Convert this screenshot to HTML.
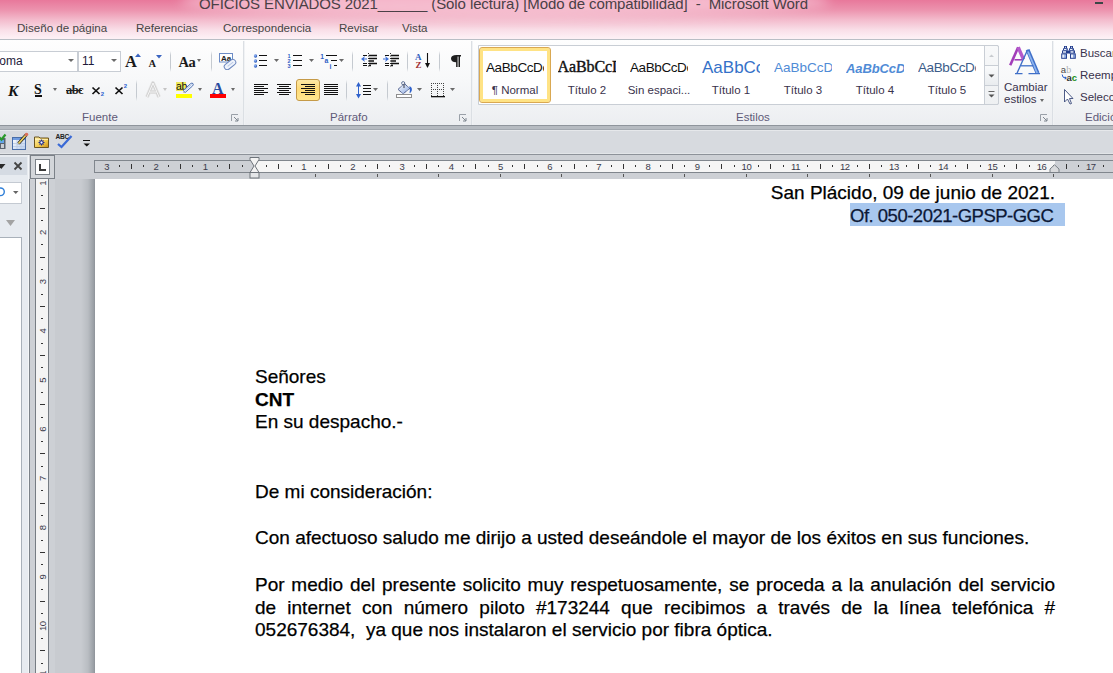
<!DOCTYPE html>
<html><head><meta charset="utf-8">
<style>
*{box-sizing:border-box}
html,body{margin:0;padding:0}
body{width:1113px;height:673px;overflow:hidden;position:relative;font-family:"Liberation Sans",sans-serif;background:#c8cbd0}
.a{position:absolute}
.t{position:absolute;white-space:nowrap;line-height:1}
#title{left:0;top:0;width:1113px;height:39px;background:linear-gradient(#e8789b 0px,#ec93ae 10px,#f3bccd 20px,#f9dfe8 30px,#fdf0f5 38px)}
.tab{position:absolute;top:21px;font-size:11.6px;color:#454545;line-height:14px;letter-spacing:0px}
#rib{left:0;top:40px;width:1113px;height:85px;background:linear-gradient(#fefefe 0px,#f7f8f9 40px,#eceef1 85px)}
.lbl{position:absolute;top:111px;font-size:11.5px;color:#5e5a78;line-height:13px}
.sep{position:absolute;width:1px;background:linear-gradient(rgba(200,205,212,0),#c5cad0 20%,#c5cad0 80%,rgba(200,205,212,0))}
.gsep{position:absolute;top:41px;height:84px;width:2px;background:linear-gradient(90deg,#d0d5db,#fbfcfd)}
.dd{position:absolute;width:0;height:0;border-left:3px solid transparent;border-right:3px solid transparent;border-top:3px solid #6a6a6a}
.doc{position:absolute;font-size:19px;color:#000;line-height:23px;white-space:nowrap;-webkit-text-stroke:0.25px #000}
.sty{position:absolute;top:47px;width:72px;height:56px;overflow:hidden}
.pv{position:absolute;left:7px;width:58px;overflow:hidden;white-space:nowrap;line-height:1}
.sl{position:absolute;left:0;width:72px;top:37px;text-align:center;font-size:11.5px;color:#39324c;line-height:13px;white-space:nowrap}
</style></head><body>

<!-- title bar -->
<div id="title" class="a"></div>
<div class="a" style="left:180px;top:-14px;width:650px;height:30px;border-radius:50%;background:rgba(255,235,242,0.55);filter:blur(6px)"></div>
<div class="t" style="left:199px;top:-4px;font-size:15px;color:#4a4046;letter-spacing:-0.1px">OFICIOS ENVIADOS 2021______ (Solo lectura) [Modo de compatibilidad]&nbsp; - &nbsp;Microsoft Word</div>
<div class="a" style="left:1095px;top:2px;width:8px;height:2px;background:#3b4646"></div>

<div class="tab" style="left:17px">Diseño de página</div>
<div class="tab" style="left:136px">Referencias</div>
<div class="tab" style="left:223px">Correspondencia</div>
<div class="tab" style="left:339px">Revisar</div>
<div class="tab" style="left:402px">Vista</div>
<div class="a" style="left:0;top:39px;width:1113px;height:1px;background:#b9bec5"></div>

<!-- ribbon -->
<div id="rib" class="a"></div>

<!-- group separators -->
<div class="gsep" style="left:243px"></div>
<div class="gsep" style="left:471px"></div>
<div class="gsep" style="left:1052px"></div>


<!-- FUENTE GROUP -->
<div class="a" style="left:-1px;top:51px;width:79px;height:21px;background:#fff;border:1px solid #c8cdd4"></div>
<div class="t" style="left:-20px;top:55px;font-size:12px;color:#1e1a3a">Tahoma</div>
<div class="dd" style="left:68px;top:59px;border-left-width:3px;border-right-width:3px;border-top-width:3px"></div>
<div class="a" style="left:78px;top:51px;width:43px;height:21px;background:#fff;border:1px solid #c8cdd4"></div>
<div class="t" style="left:82px;top:55px;font-size:12px;color:#1e1a3a">11</div>
<div class="dd" style="left:111px;top:59px"></div>
<div class="t" style="left:125px;top:54px;font-size:16.5px;font-family:'Liberation Serif';font-weight:bold;color:#1a1a1a">A</div>
<svg class="a" style="left:135px;top:53px" width="6" height="4"><path d="M0 4 L3 0.5 L6 4Z" fill="#3a64c0"/></svg>
<div class="t" style="left:148.5px;top:59px;font-size:10.5px;font-family:'Liberation Serif';font-weight:bold;color:#1a1a1a">A</div>
<svg class="a" style="left:156px;top:54.5px" width="6" height="4"><path d="M0 0 L6 0 L3 3.5Z" fill="#3a64c0"/></svg>
<div class="sep" style="left:170px;top:51px;height:21px"></div>
<div class="t" style="left:178.5px;top:55px;font-size:14.5px;font-family:'Liberation Serif';font-weight:bold;color:#1a1a1a;letter-spacing:-0.5px">Aa</div>
<div class="dd" style="left:197px;top:59px;border-width:3px 2.5px 0 2.5px"></div>
<div class="sep" style="left:211px;top:51px;height:21px"></div>
<svg class="a" style="left:219px;top:53px" width="18" height="17">
 <rect x="0.5" y="0.5" width="13" height="8.5" fill="#fff" stroke="#6d8cc6"/>
 <text x="2" y="8" font-family="Liberation Sans" font-size="8" font-weight="bold" fill="#222">Aa</text>
 <g transform="rotate(-38 11 11.5)"><rect x="4.5" y="8.5" width="13" height="6" rx="3" fill="#eef3fb" stroke="#6c86bd"/><line x1="8" y1="11.5" x2="15" y2="11.5" stroke="#b9c8e6"/></g>
</svg>

<div class="t" style="left:8px;top:82.5px;font-size:15.5px;font-family:'Liberation Serif';font-weight:bold;font-style:italic;color:#111">K</div>
<div class="t" style="left:34px;top:82.5px;font-size:14px;font-family:'Liberation Serif';font-weight:bold;color:#111">S</div>
<div class="a" style="left:35px;top:95px;width:7px;height:1.5px;background:#111"></div>
<div class="dd" style="left:53px;top:88px;border-width:3px 2.5px 0 2.5px"></div>
<div class="t" style="left:66px;top:84px;font-size:12.5px;font-family:'Liberation Serif';font-weight:bold;color:#222;letter-spacing:-0.6px">abc</div>
<div class="a" style="left:66px;top:90px;width:16px;height:1px;background:#222"></div>
<svg class="a" style="left:91px;top:83px" width="40" height="15">
 <path d="M1.5 4.5 L8.5 11 M8.5 4.5 L1.5 11" stroke="#111" stroke-width="1.7"/>
 <text x="9.8" y="13" font-family="Liberation Sans" font-size="6" font-weight="bold" fill="#2b5fd0">2</text>
 <path d="M24.5 4.5 L31.5 11 M31.5 4.5 L24.5 11" stroke="#111" stroke-width="1.7"/>
 <text x="32.8" y="5" font-family="Liberation Sans" font-size="6" font-weight="bold" fill="#2b5fd0">2</text>
</svg>
<div class="sep" style="left:136px;top:80px;height:21px"></div>
<svg class="a" style="left:144px;top:81px" width="18" height="18"><g fill="none" stroke-linejoin="round"><path d="M3 16 L9 2 L15 16 M5.5 11 H12.5" stroke="#e4e4e4" stroke-width="4"/><path d="M3 16 L9 2 L15 16 M5.5 11 H12.5" stroke="#cfcfcf" stroke-width="2.4"/><path d="M3 16 L9 2 L15 16 M5.5 11 H12.5" stroke="#fbfbfb" stroke-width="0.9"/></g></svg>
<div class="dd" style="left:163px;top:88px;border-width:3px 2.5px 0 2.5px;border-top-color:#c4c4c4"></div>
<div class="a" style="left:176px;top:82px;width:10px;height:9px;background:#eee85a"></div>
<div class="t" style="left:176px;top:81px;font-size:10.5px;color:#111;letter-spacing:-0.3px">ab</div>
<svg class="a" style="left:182px;top:82px" width="12" height="11">
 <path d="M1.5 9.8 L1 10.8 L3 10.3 Z" fill="#d2a050"/>
 <path d="M1.2 8.6 L8.6 1.6 Q10 0.6 11 1.6 Q11.8 2.8 10.6 3.9 L3.2 10.5 Z" fill="#e9f0fb" stroke="#3f63a8" stroke-width="0.9"/>
 <path d="M3 8.2 L9.5 2.4" stroke="#9ab4e0" stroke-width="0.8"/>
</svg>
<div class="a" style="left:176px;top:94px;width:16px;height:4px;background:#ffff00"></div>
<div class="dd" style="left:198px;top:88px;border-width:3px 2.5px 0 2.5px"></div>
<div class="t" style="left:212px;top:80.5px;font-size:16px;font-family:'Liberation Serif';font-weight:bold;color:#2a4c9e">A</div>
<div class="a" style="left:210px;top:94px;width:16px;height:4px;background:#ff0000"></div>
<div class="dd" style="left:231px;top:88px;border-width:3px 2.5px 0 2.5px"></div>
<svg class="a" style="left:231px;top:114px" width="8" height="8"><path d="M0.5 7 V0.5 H7" fill="none" stroke="#9aa0a8"/><path d="M3 3 L7 7 M7 4 V7 H4" fill="none" stroke="#7f868f"/></svg>
<div class="lbl" style="left:82px">Fuente</div>

<!-- PARRAFO GROUP -->
<svg class="a" style="left:250px;top:48px" width="222" height="78">
 <defs>
  <radialGradient id="bd" cx="0.35" cy="0.35" r="0.7"><stop offset="0" stop-color="#9fc0ff"/><stop offset="1" stop-color="#1f4fb0"/></radialGradient>
  <linearGradient id="selg" x1="0" y1="0" x2="0" y2="1"><stop offset="0" stop-color="#fde9a8"/><stop offset="0.45" stop-color="#fedb78"/><stop offset="1" stop-color="#ffe690"/></linearGradient>
  <linearGradient id="bkt" x1="0" y1="0" x2="1" y2="1"><stop offset="0" stop-color="#ffffff"/><stop offset="1" stop-color="#8aa8e0"/></linearGradient>
 </defs>
 <!-- bullets -->
 <circle cx="5.5" cy="8" r="1.7" fill="url(#bd)"/><circle cx="5.5" cy="13" r="1.7" fill="url(#bd)"/><circle cx="5.5" cy="18" r="1.7" fill="url(#bd)"/>
 <path d="M9 7.5H17M9 12.5H17M9 17.5H17" stroke="#111" stroke-width="1.1"/>
 <path d="M24 11H29L26.5 14Z" fill="#6a6a6a"/>
 <!-- numbering -->
 <g fill="#2d5dc4" font-family="Liberation Sans" font-weight="bold" font-size="5.5"><text x="37.5" y="10">1</text><text x="37.5" y="15">2</text><text x="37.5" y="20">3</text></g>
 <path d="M43 7.5H52M43 12.5H52M43 17.5H52" stroke="#111" stroke-width="1.1"/>
 <path d="M59 11H64L61.5 14Z" fill="#6a6a6a"/>
 <!-- multilevel -->
 <g fill="#2d5dc4" font-family="Liberation Sans" font-weight="bold" font-size="6.8"><text x="70.3" y="10.6">1</text><text x="74.6" y="15.4">a</text><text x="79.6" y="21">i</text></g>
 <path d="M76 7.5H87M81 12.5H87M84 17.5H87" stroke="#111" stroke-width="1.1"/>
 <path d="M89 11H94L91.5 14Z" fill="#6a6a6a"/>
 <!-- decrease indent -->
 <g transform="translate(111,0)">
  <path d="M7.5 5V20" stroke="#111" stroke-width="0.9" stroke-dasharray="1 1.5"/>
  <path d="M2 7.5H6M2 15.5H6M2 17.5H6" stroke="#111" stroke-width="1"/>
  <path d="M8 7.5H16M8 10.5H16M8 13H13M8 15.5H16M8 17.5H10" stroke="#111" stroke-width="1.3"/>
  <path d="M0 11 L4 8 L3 10.5 H6 V11.5 H3 L4 14Z" fill="#3d6fd6"/>
 </g>
 <g transform="translate(133,0)">
  <path d="M7.5 5V20" stroke="#111" stroke-width="0.9" stroke-dasharray="1 1.5"/>
  <path d="M2 7.5H6M2 15.5H6M2 17.5H6" stroke="#111" stroke-width="1"/>
  <path d="M8 7.5H16M8 10.5H16M8 13H13M8 15.5H16M8 17.5H10" stroke="#111" stroke-width="1.3"/>
  <path d="M6 11 L2 8 L3 10.5 H0 V11.5 H3 L2 14Z" fill="#3d6fd6"/>
 </g>
 <!-- sort -->
 <text x="165" y="12" font-family="Liberation Serif" font-weight="bold" font-size="9" fill="#2f5fc0">A</text>
 <text x="165.5" y="20" font-family="Liberation Serif" font-weight="bold" font-size="9" fill="#a03030">Z</text>
 <path d="M177.5 5V19" stroke="#111" stroke-width="1.1"/><path d="M175 15L177.5 20L180 15Z" fill="#111"/>
 <!-- pilcrow -->
 <path d="M206.5 7 H211 V8.5 H210 V19 H208.5 V8.5 H207.6 V19 H206.1 V14.2 Q201 14.2 201 10.6 Q201 7 206.5 7Z" fill="#1e1e1e"/>
 <!-- align row -->
 <path d="M4 36.5H18M4 38.5H14M4 40.5H18M4 42.5H14M4 44.5H18M4 46.5H14" stroke="#111" stroke-width="1"/>
 <path d="M27 36.5H41M29 38.5H39M27 40.5H41M29 42.5H39M27 44.5H41M29 46.5H39" stroke="#111" stroke-width="1"/>
 <rect x="46.5" y="31.5" width="23" height="21" rx="2.5" fill="url(#selg)" stroke="#c59a48"/>
 <path d="M51 36.5H65M55 38.5H65M51 40.5H65M55 42.5H65M51 44.5H65M55 46.5H65" stroke="#111" stroke-width="1"/>
 <path d="M74 36.5H88M74 38.5H88M74 40.5H88M74 42.5H88M74 44.5H88M74 46.5H88" stroke="#111" stroke-width="1"/>
 <!-- line spacing -->
 <path d="M108.5 36V49" stroke="#2f62cc" stroke-width="1"/>
 <path d="M106 38.5L108.5 34L111 38.5Z M106 46L108.5 50.5L111 46Z" fill="#2f62cc"/>
 <path d="M113 37.5H121M113 40.5H121M113 43.5H121M113 46.5H121" stroke="#111" stroke-width="1.1"/>
 <path d="M123 40H128L125.5 43Z" fill="#6a6a6a"/>
 <!-- shading -->
 <rect x="146.5" y="46.5" width="15" height="3" fill="#fff" stroke="#8e8e8e"/>
 <path d="M148 41.4 L154.4 35.6 L159.8 40.5 L153.1 45.8Z" fill="url(#bkt)" stroke="#24366e" stroke-width="1" stroke-dasharray="1 0.6"/>
 <circle cx="153.2" cy="35.2" r="1.6" fill="none" stroke="#55688e" stroke-width="0.9"/>
 <path d="M154 36 V40" stroke="#5a6070" stroke-width="1.3"/>
 <path d="M159.3 38.2 Q162.5 39 161.8 42.5 Q161 45 159.5 45 Q160.5 42 159.3 38.2Z" fill="#2f62cc"/>
 <path d="M167 40H172L169.5 43Z" fill="#6a6a6a"/>
 <!-- borders -->
 <path d="M181 35h1v1h-1z M181 41h1v1h-1z M183 35h1v1h-1z M183 41h1v1h-1z M185 35h1v1h-1z M185 41h1v1h-1z M187 35h1v1h-1z M187 41h1v1h-1z M189 35h1v1h-1z M189 41h1v1h-1z M191 35h1v1h-1z M191 41h1v1h-1z M193 35h1v1h-1z M193 41h1v1h-1z M181 37h1v1h-1z M187 37h1v1h-1z M193 37h1v1h-1z M181 39h1v1h-1z M187 39h1v1h-1z M193 39h1v1h-1z M181 41h1v1h-1z M187 41h1v1h-1z M193 41h1v1h-1z M181 43h1v1h-1z M187 43h1v1h-1z M193 43h1v1h-1z M181 45h1v1h-1z M187 45h1v1h-1z M193 45h1v1h-1z M181 47h1v1h-1z M187 47h1v1h-1z M193 47h1v1h-1z" fill="#444"/>
 <rect x="181" y="48" width="14" height="1.3" fill="#111"/>
 <path d="M200 40H205L202.5 43Z" fill="#6a6a6a"/>
 <!-- dialog launcher -->
 <path d="M209.5 73 V66.5 H216" fill="none" stroke="#9aa0a8"/><path d="M212 69 L216 73 M216 70 V73 H213" fill="none" stroke="#7f868f"/>
</svg>
<div class="sep" style="left:352px;top:51px;height:21px"></div>
<div class="sep" style="left:407px;top:51px;height:21px"></div>
<div class="sep" style="left:439px;top:51px;height:21px"></div>
<div class="sep" style="left:346px;top:80px;height:21px"></div>
<div class="sep" style="left:387px;top:80px;height:21px"></div>
<div class="lbl" style="left:330px">Párrafo</div>

<!-- ESTILOS GROUP -->
<div class="a" style="left:478px;top:45px;width:521px;height:60px;background:#fff;border:1px solid #c9ced5;border-radius:0 2px 2px 0"></div>
<div class="a" style="left:479px;top:47px;width:72px;height:56px;border:1px solid #d9a852;border-radius:3px;background:#fff;box-shadow:inset 0 0 0 3px #ffe385"></div>
<div class="sty" style="left:479px"><div class="pv" style="font-size:13.5px;top:14px;color:#111;letter-spacing:-0.4px">AaBbCcDc</div><div class="sl">¶ Normal</div></div>
<div class="sty" style="left:551px"><div class="pv" style="font-family:'Liberation Serif';font-size:16px;top:11.5px;color:#111;left:6.5px;letter-spacing:-0.1px;-webkit-text-stroke:0.4px #111">AaBbCcDd</div><div class="sl">Título 2</div></div>
<div class="sty" style="left:623px"><div class="pv" style="font-size:13.5px;top:14px;color:#111;letter-spacing:-0.4px">AaBbCcDc</div><div class="sl">Sin espaci...</div></div>
<div class="sty" style="left:695px"><div class="pv" style="font-size:17px;top:11.5px;color:#3471c8">AaBbCcDc</div><div class="sl">Título 1</div></div>
<div class="sty" style="left:767px"><div class="pv" style="font-size:13.5px;top:14px;color:#4f8bd6;letter-spacing:0px">AaBbCcDc</div><div class="sl">Título 3</div></div>
<div class="sty" style="left:839px"><div class="pv" style="font-size:13px;top:14.5px;color:#4f8bd6;font-weight:bold;font-style:italic;letter-spacing:-0.1px">AaBbCcDc</div><div class="sl">Título 4</div></div>
<div class="sty" style="left:911px"><div class="pv" style="font-size:13.5px;top:14px;color:#3b5c8a;letter-spacing:-0.4px">AaBbCcDc</div><div class="sl">Título 5</div></div>
<div class="a" style="left:984px;top:45px;width:15px;height:60px;border:1px solid #c9ced5;border-radius:0 2px 2px 0;background:linear-gradient(#f8f9fa,#eef0f2)"></div>
<div class="a" style="left:985px;top:65px;width:13px;height:1px;background:#c9ced5"></div>
<div class="a" style="left:985px;top:66px;width:13px;height:19px;background:linear-gradient(#fafbfc,#e9ecef)"></div>
<div class="a" style="left:985px;top:85px;width:13px;height:1px;background:#c9ced5"></div>
<svg class="a" style="left:985px;top:46px" width="13" height="58">
 <path d="M4 11H9L6.5 8.5Z" fill="#c8cbcf"/>
 <path d="M3.5 28.5H9.5L6.5 31.5Z" fill="#555"/>
 <path d="M3.5 45.5H9.5" stroke="#666" stroke-width="1"/><path d="M3.5 48.5H9.5L6.5 51.5Z" fill="#555"/>
</svg>
<svg class="a" style="left:1008px;top:45px" width="36" height="32">
 <defs><linearGradient id="ablue" x1="0" y1="0" x2="1" y2="0"><stop offset="0" stop-color="#3a6cc6"/><stop offset="0.5" stop-color="#8db4f0"/><stop offset="1" stop-color="#3a6cc6"/></linearGradient></defs>
 <path d="M2.2 20.2 L10.2 2.3" stroke="#a23db9" stroke-width="2.6"/>
 <path d="M10.2 2.3 L15.5 14.5" stroke="#b45acb" stroke-width="3.4"/>
 <path d="M6.5 14.8 H14" stroke="#a23db9" stroke-width="1.6"/>
 <path d="M9 28.2 L19.6 4.8" stroke="#3f6fc8" stroke-width="1.4"/>
 <path d="M19.6 4.8 L29.6 28.2" stroke="#3f6fc8" stroke-width="4"/>
 <path d="M19.9 6.5 L29.2 28" stroke="#8db4ef" stroke-width="1.8"/>
 <path d="M13 20.8 H25.5" stroke="#3f6fc8" stroke-width="1.3"/>
 <path d="M7 28.6 H14.5 M20.5 28.6 H32" stroke="#3f6fc8" stroke-width="1.4"/>
</svg>
<div class="t" style="left:1004px;top:82px;font-size:11.5px;color:#39324c;line-height:11px">Cambiar</div>
<div class="t" style="left:1004px;top:94px;font-size:11.5px;color:#39324c;line-height:11px">estilos</div>
<div class="dd" style="left:1040px;top:99px;border-width:3px 2.5px 0 2.5px"></div>
<svg class="a" style="left:1040px;top:114px" width="8" height="8"><path d="M0.5 7 V0.5 H7" fill="none" stroke="#9aa0a8"/><path d="M3 3 L7 7 M7 4 V7 H4" fill="none" stroke="#7f868f"/></svg>

<!-- EDICION GROUP -->
<svg class="a" style="left:1060px;top:45px" width="18" height="60">
 <g fill="#253f8f">
  <rect x="4" y="1" width="3" height="2.5"/><rect x="3" y="3.3" width="4.8" height="2.2"/><rect x="2" y="5.4" width="5.2" height="3"/><rect x="1.2" y="8.4" width="5.8" height="5.4"/>
  <rect x="6.8" y="5.5" width="3.3" height="3"/>
  <rect x="10" y="1" width="3" height="2.5"/><rect x="9" y="3.3" width="5" height="2.2"/><rect x="9.5" y="5.4" width="5.5" height="3"/><rect x="10" y="8.4" width="5.8" height="5.4"/>
 </g>
 <g fill="#e8effb"><rect x="5" y="1.8" width="1" height="1"/><rect x="4" y="4" width="2.5" height="1"/><rect x="3" y="6.2" width="3" height="1.5"/><rect x="2.2" y="9.4" width="2.5" height="3.4"/>
  <rect x="11" y="1.8" width="1" height="1"/><rect x="10" y="4" width="2.5" height="1"/><rect x="10.5" y="6.2" width="3" height="1.5"/><rect x="11" y="9.4" width="2.5" height="3.4"/></g>
 <g fill="#8eaee6"><rect x="4.7" y="9.4" width="1.3" height="3.4"/><rect x="13.5" y="9.4" width="1.3" height="3.4"/></g>
 <text x="0.8" y="28.3" font-family="Liberation Sans" font-size="9.5" fill="#4a4a4a">a</text>
 <text x="6.3" y="28.3" font-family="Liberation Serif" font-size="10" fill="#b0b0b0">b</text>
 <path d="M2.2 29.5 Q2.2 33 5.5 33" fill="none" stroke="#2f62cc" stroke-width="1"/><path d="M4.8 31.3 L7 33 L4.8 34.7Z" fill="#2f62cc"/>
 <text x="6.6" y="35.5" font-family="Liberation Sans" font-weight="bold" font-size="9.5" fill="#333">a</text>
 <text x="11.8" y="35.5" font-family="Liberation Sans" font-weight="bold" font-size="9.5" fill="#199019">c</text>
 <path d="M4.5 44.5 V57 L7.5 54 L10 59 L11.5 58.5 L9.5 53.5 H13Z" fill="#fff" stroke="#3a4a7a" stroke-width="0.9"/>
</svg>
<div class="t" style="left:1080px;top:48px;font-size:11.5px;color:#39324c;line-height:11px">Buscar</div>
<div class="t" style="left:1080px;top:70px;font-size:11.5px;color:#39324c;line-height:11px">Reemplazar</div>
<div class="t" style="left:1080px;top:92px;font-size:11.5px;color:#39324c;line-height:11px">Seleccionar</div>
<div class="lbl" style="left:736px">Estilos</div>
<div class="lbl" style="left:1085px">Edición</div>

<!-- ribbon bottom / QAT -->
<div class="a" style="left:0;top:125px;width:1113px;height:1px;background:#8f959c"></div>
<div class="a" style="left:0;top:126px;width:1113px;height:3px;background:#b6bbc1"></div>
<div class="a" style="left:0;top:129px;width:1113px;height:1px;background:#a3a9b0"></div>
<div class="a" style="left:0;top:130px;width:1113px;height:1px;background:#e6e8eb"></div>
<div class="a" style="left:0;top:131px;width:1113px;height:22px;background:#d7dadf"></div>
<div class="a" style="left:0;top:153px;width:1113px;height:1px;background:#e2e5e8"></div>
<div class="a" style="left:0;top:154px;width:1113px;height:1px;background:#8d9299"></div>

<!-- ruler row -->
<div class="a" style="left:29px;top:155px;width:1084px;height:24px;background:#cdd0d5"></div>

<!-- left pane -->
<div class="a" style="left:0;top:155px;width:29px;height:518px;background:#e7ebf0"></div>
<div class="a" style="left:0;top:157px;width:27px;height:18px;background:#d5dbe3"></div>
<div class="a" style="left:28px;top:155px;width:1px;height:518px;background:#f4f6f8"></div>

<!-- vertical ruler column -->
<div class="a" style="left:29px;top:179px;width:1px;height:494px;background:#7d838a"></div>
<div class="a" style="left:30px;top:179px;width:25px;height:494px;background:#cdd0d5"></div>


<!-- QAT icons -->
<svg class="a" style="left:0;top:132px" width="100" height="20">
 <defs>
  <linearGradient id="fold" x1="0" y1="0" x2="1" y2="1"><stop offset="0" stop-color="#fff2b0"/><stop offset="0.6" stop-color="#f2c84a"/><stop offset="1" stop-color="#c98a10"/></linearGradient>
  <linearGradient id="tbl" x1="0" y1="0" x2="1" y2="1"><stop offset="0" stop-color="#ffffff"/><stop offset="1" stop-color="#b7cdee"/></linearGradient>
 </defs>
 <rect x="-3" y="6" width="8.5" height="11" fill="#5b6470"/><rect x="-2" y="8" width="6" height="3" fill="#64a6e8"/><rect x="1" y="12" width="3" height="4" fill="#c9ced4"/>
 <path d="M-1 5 L1.5 7.5 L5.5 2.5" fill="none" stroke="#2a9a2a" stroke-width="2.2"/>
 <rect x="12.5" y="5.5" width="13" height="12" fill="url(#tbl)" stroke="#4a6ea8"/>
 <rect x="13" y="6" width="12" height="2" fill="#6f9be0"/>
 <path d="M13 11.5H25M13 14.5H25M17 8V17M21 8V17" stroke="#b9c9e2" stroke-width="0.8"/>
 <path d="M18.5 11.5 L26 3" stroke="#222" stroke-width="3.2"/><path d="M18.5 11.5 L26 3" stroke="#ecd060" stroke-width="1.8"/>
 <circle cx="26.5" cy="2.5" r="1.8" fill="#d8705a"/>
 <path d="M18 12.5 L17.5 13 L19 12.6Z" fill="#222"/>
 <path d="M34.5 15.5 V5 H39 L40 6 H48.5 V15.5Z" fill="url(#fold)" stroke="#6b5420"/>
 <path d="M35 7.5H48" stroke="#fff3c0" stroke-width="0.8"/>
 <g stroke="#1e2a8a" stroke-width="1.1"><path d="M41.5 7.5V13.5M38.5 10.5H44.5M39.5 8.5L43.5 12.5M43.5 8.5L39.5 12.5"/></g>
 <circle cx="41.5" cy="10.5" r="1.4" fill="#fff" stroke="#1e2a8a" stroke-width="0.8"/>
 <text x="55.5" y="7.3" font-family="Liberation Sans" font-weight="bold" font-size="6.6" fill="#222" letter-spacing="-0.3">ABC</text>
 <path d="M58 12 L61.5 15 L71.5 4" fill="none" stroke="#3a6ad6" stroke-width="2.3"/>
 <path d="M83 8.5H90" stroke="#111" stroke-width="1"/><path d="M83.5 11.5H90L86.75 14.5Z" fill="#111"/>
</svg>

<!-- left pane -->
<svg class="a" style="left:0;top:155px" width="29" height="518">
 <path d="M-3 9H5.5L1.25 14Z" fill="#2a2a2a"/>
 <path d="M14.5 7.5L21.5 14.5M21.5 7.5L14.5 14.5" stroke="#444" stroke-width="1.8"/>
 <rect x="-1" y="27.5" width="22.5" height="21" fill="#fff" stroke="#c4cad2"/>
 <circle cx="0.5" cy="36.8" r="3.8" fill="none" stroke="#2f7fd8" stroke-width="1.4"/>
 <path d="M13 36H18.5L15.75 39Z" fill="#666"/>
 <path d="M6 65H15L10.5 71Z" fill="#a3a3a3"/>
 <rect x="-1" y="82.5" width="22.5" height="440" fill="#fff" stroke="#a9b1ba"/>
</svg>

<!-- tab selector -->
<div class="a" style="left:30px;top:155px;width:25px;height:24px;border:1px solid #7b8188;background:#d3d6da"></div>
<div class="a" style="left:35px;top:159px;width:15px;height:16px;border:1px solid #7b8188;background:#fff"></div>
<div class="a" style="left:39px;top:164px;width:2px;height:7px;background:#3a3a3a"></div>
<div class="a" style="left:39px;top:169px;width:7px;height:2px;background:#3a3a3a"></div>

<!-- vertical ruler -->
<div class="a" style="left:35px;top:179px;width:14px;height:494px;background:#f4f4f4;border-left:1px solid #767c83;border-right:1px solid #767c83"></div>
<svg class="a" style="left:36px;top:179px" width="12" height="494" id="vr"><g font-family="Liberation Sans" font-size="9.5" fill="#3a3a4a" letter-spacing="-0.4"><text transform="translate(9.8 4.4) rotate(-90)" text-anchor="middle" y="0">1</text><rect x="5" y="16" width="2" height="1" fill="#333"/><rect x="4" y="29" width="5" height="1" fill="#333"/><rect x="5" y="41" width="2" height="1" fill="#333"/><text transform="translate(9.8 53.6) rotate(-90)" text-anchor="middle" y="0">2</text><rect x="5" y="65" width="2" height="1" fill="#333"/><rect x="4" y="78" width="5" height="1" fill="#333"/><rect x="5" y="90" width="2" height="1" fill="#333"/><text transform="translate(9.8 102.8) rotate(-90)" text-anchor="middle" y="0">3</text><rect x="5" y="115" width="2" height="1" fill="#333"/><rect x="4" y="127" width="5" height="1" fill="#333"/><rect x="5" y="139" width="2" height="1" fill="#333"/><text transform="translate(9.8 152.0) rotate(-90)" text-anchor="middle" y="0">4</text><rect x="5" y="164" width="2" height="1" fill="#333"/><rect x="4" y="176" width="5" height="1" fill="#333"/><rect x="5" y="188" width="2" height="1" fill="#333"/><text transform="translate(9.8 201.2) rotate(-90)" text-anchor="middle" y="0">5</text><rect x="5" y="213" width="2" height="1" fill="#333"/><rect x="4" y="225" width="5" height="1" fill="#333"/><rect x="5" y="238" width="2" height="1" fill="#333"/><text transform="translate(9.8 250.4) rotate(-90)" text-anchor="middle" y="0">6</text><rect x="5" y="262" width="2" height="1" fill="#333"/><rect x="4" y="274" width="5" height="1" fill="#333"/><rect x="5" y="287" width="2" height="1" fill="#333"/><text transform="translate(9.8 299.6) rotate(-90)" text-anchor="middle" y="0">7</text><rect x="5" y="311" width="2" height="1" fill="#333"/><rect x="4" y="324" width="5" height="1" fill="#333"/><rect x="5" y="336" width="2" height="1" fill="#333"/><text transform="translate(9.8 348.8) rotate(-90)" text-anchor="middle" y="0">8</text><rect x="5" y="361" width="2" height="1" fill="#333"/><rect x="4" y="373" width="5" height="1" fill="#333"/><rect x="5" y="385" width="2" height="1" fill="#333"/><text transform="translate(9.8 398.0) rotate(-90)" text-anchor="middle" y="0">9</text><rect x="5" y="410" width="2" height="1" fill="#333"/><rect x="4" y="422" width="5" height="1" fill="#333"/><rect x="5" y="434" width="2" height="1" fill="#333"/><text transform="translate(9.8 447.2) rotate(-90)" text-anchor="middle" y="0">10</text><rect x="5" y="459" width="2" height="1" fill="#333"/><rect x="4" y="471" width="5" height="1" fill="#333"/><rect x="5" y="484" width="2" height="1" fill="#333"/><text transform="translate(9.8 496.4) rotate(-90)" text-anchor="middle" y="0">11</text></g></svg>

<!-- horizontal ruler -->
<div class="a" style="left:94px;top:160px;width:1019px;height:13px;border:1px solid #80868d;border-right:none;background:#cdd0d5"></div>
<div class="a" style="left:254px;top:161px;width:801px;height:11px;background:#f5f5f5"></div>
<svg class="a" style="left:94px;top:155px" width="1019" height="24" id="hr"><g font-family="Liberation Sans" font-size="9.5" fill="#3a3a4a" letter-spacing="-0.4"><text x="12.8" y="14.6" text-anchor="middle">3</text><rect x="25" y="10" width="1" height="2" fill="#333"/><rect x="37" y="9" width="1" height="5" fill="#333"/><rect x="49" y="10" width="1" height="2" fill="#333"/><text x="62.0" y="14.6" text-anchor="middle">2</text><rect x="74" y="10" width="1" height="2" fill="#333"/><rect x="86" y="9" width="1" height="5" fill="#333"/><rect x="98" y="10" width="1" height="2" fill="#333"/><text x="111.2" y="14.6" text-anchor="middle">1</text><rect x="123" y="10" width="1" height="2" fill="#333"/><rect x="135" y="9" width="1" height="5" fill="#333"/><rect x="148" y="10" width="1" height="2" fill="#333"/><rect x="172" y="10" width="1" height="2" fill="#333"/><rect x="184" y="9" width="1" height="5" fill="#333"/><rect x="197" y="10" width="1" height="2" fill="#333"/><text x="209.6" y="14.6" text-anchor="middle">1</text><rect x="221" y="10" width="1" height="2" fill="#333"/><rect x="234" y="9" width="1" height="5" fill="#333"/><rect x="246" y="10" width="1" height="2" fill="#333"/><text x="258.8" y="14.6" text-anchor="middle">2</text><rect x="271" y="10" width="1" height="2" fill="#333"/><rect x="283" y="9" width="1" height="5" fill="#333"/><rect x="295" y="10" width="1" height="2" fill="#333"/><text x="308.0" y="14.6" text-anchor="middle">3</text><rect x="320" y="10" width="1" height="2" fill="#333"/><rect x="332" y="9" width="1" height="5" fill="#333"/><rect x="344" y="10" width="1" height="2" fill="#333"/><text x="357.2" y="14.6" text-anchor="middle">4</text><rect x="369" y="10" width="1" height="2" fill="#333"/><rect x="381" y="9" width="1" height="5" fill="#333"/><rect x="394" y="10" width="1" height="2" fill="#333"/><text x="406.4" y="14.6" text-anchor="middle">5</text><rect x="418" y="10" width="1" height="2" fill="#333"/><rect x="430" y="9" width="1" height="5" fill="#333"/><rect x="443" y="10" width="1" height="2" fill="#333"/><text x="455.6" y="14.6" text-anchor="middle">6</text><rect x="467" y="10" width="1" height="2" fill="#333"/><rect x="480" y="9" width="1" height="5" fill="#333"/><rect x="492" y="10" width="1" height="2" fill="#333"/><text x="504.8" y="14.6" text-anchor="middle">7</text><rect x="517" y="10" width="1" height="2" fill="#333"/><rect x="529" y="9" width="1" height="5" fill="#333"/><rect x="541" y="10" width="1" height="2" fill="#333"/><text x="554.0" y="14.6" text-anchor="middle">8</text><rect x="566" y="10" width="1" height="2" fill="#333"/><rect x="578" y="9" width="1" height="5" fill="#333"/><rect x="590" y="10" width="1" height="2" fill="#333"/><text x="603.2" y="14.6" text-anchor="middle">9</text><rect x="615" y="10" width="1" height="2" fill="#333"/><rect x="627" y="9" width="1" height="5" fill="#333"/><rect x="640" y="10" width="1" height="2" fill="#333"/><text x="652.4" y="14.6" text-anchor="middle">10</text><rect x="664" y="10" width="1" height="2" fill="#333"/><rect x="676" y="9" width="1" height="5" fill="#333"/><rect x="689" y="10" width="1" height="2" fill="#333"/><text x="701.6" y="14.6" text-anchor="middle">11</text><rect x="713" y="10" width="1" height="2" fill="#333"/><rect x="726" y="9" width="1" height="5" fill="#333"/><rect x="738" y="10" width="1" height="2" fill="#333"/><text x="750.8" y="14.6" text-anchor="middle">12</text><rect x="763" y="10" width="1" height="2" fill="#333"/><rect x="775" y="9" width="1" height="5" fill="#333"/><rect x="787" y="10" width="1" height="2" fill="#333"/><text x="800.0" y="14.6" text-anchor="middle">13</text><rect x="812" y="10" width="1" height="2" fill="#333"/><rect x="824" y="9" width="1" height="5" fill="#333"/><rect x="836" y="10" width="1" height="2" fill="#333"/><text x="849.2" y="14.6" text-anchor="middle">14</text><rect x="861" y="10" width="1" height="2" fill="#333"/><rect x="873" y="9" width="1" height="5" fill="#333"/><rect x="886" y="10" width="1" height="2" fill="#333"/><text x="898.4" y="14.6" text-anchor="middle">15</text><rect x="910" y="10" width="1" height="2" fill="#333"/><rect x="922" y="9" width="1" height="5" fill="#333"/><rect x="935" y="10" width="1" height="2" fill="#333"/><text x="947.6" y="14.6" text-anchor="middle">16</text><rect x="959" y="10" width="1" height="2" fill="#333"/><rect x="972" y="9" width="1" height="5" fill="#333"/><rect x="984" y="10" width="1" height="2" fill="#333"/><text x="996.8" y="14.6" text-anchor="middle">17</text><rect x="1009" y="10" width="1" height="2" fill="#333"/><rect x="221" y="19" width="1" height="3" fill="#555"/><rect x="283" y="19" width="1" height="3" fill="#555"/><rect x="344" y="19" width="1" height="3" fill="#555"/><rect x="406" y="19" width="1" height="3" fill="#555"/><rect x="467" y="19" width="1" height="3" fill="#555"/><rect x="529" y="19" width="1" height="3" fill="#555"/><rect x="590" y="19" width="1" height="3" fill="#555"/><rect x="652" y="19" width="1" height="3" fill="#555"/><rect x="713" y="19" width="1" height="3" fill="#555"/><rect x="775" y="19" width="1" height="3" fill="#555"/><rect x="836" y="19" width="1" height="3" fill="#555"/><rect x="898" y="19" width="1" height="3" fill="#555"/><rect x="959" y="19" width="1" height="3" fill="#555"/></g><path d="M156.0 2.5 H165.0 V4.5 L161.0 11 L165.0 17.5 H156.0 L160.0 11 L156.0 4.5Z" fill="#f3f3f3" stroke="#6e747b"/><rect x="156.0" y="17.5" width="9" height="5.5" fill="#e4e6e8" stroke="#6e747b"/><path d="M956.0 17.5 V14 L960.5 9.8 L965.0 14 V17.5Z" fill="#d9dadc" stroke="#7a8087"/></svg>
<!-- document page -->
<div class="a" style="left:81px;top:179px;width:14px;height:494px;background:linear-gradient(90deg,rgba(150,155,160,0),#b9bdc2 50%,#9a9fa5 90%,#8d9298)"></div>
<div class="a" style="left:95px;top:179px;width:1018px;height:494px;background:#fff"></div>

<!-- document text -->
<div class="doc" style="left:0;top:180.8px;width:1055px;text-align:right">San Plácido, 09 de junio de 2021.</div>
<div class="a" style="left:850px;top:203px;width:215px;height:23px;background:#a8c7ee"></div>
<div class="doc" style="left:850px;top:203.6px;font-size:18.5px;letter-spacing:-0.5px;color:#0c1836;-webkit-text-stroke-color:#0c1836">Of. 050-2021-GPSP-GGC</div>

<div class="doc" style="left:255px;top:364.6px">Señores</div>
<div class="doc" style="left:255px;top:387.5px;font-weight:bold">CNT</div>
<div class="doc" style="left:255px;top:410.4px">En su despacho.-</div>
<div class="doc" style="left:255px;top:479.7px">De mi consideración:</div>
<div class="doc" style="left:255px;top:525.6px">Con afectuoso saludo me dirijo a usted deseándole el mayor de los éxitos en sus funciones.</div>
<div class="doc" style="left:255px;top:572.9px;width:800px;text-align:justify;text-align-last:justify">Por medio del presente solicito muy respetuosamente, se proceda a la anulación del servicio</div>
<div class="doc" style="left:255px;top:595.7px;width:800px;text-align:justify;text-align-last:justify">de internet con número piloto #173244 que recibimos a través de la línea telefónica #</div>
<div class="doc" style="left:255px;top:618.3px">052676384,&nbsp; ya que nos instalaron el servicio por fibra óptica.</div>

</body></html>
